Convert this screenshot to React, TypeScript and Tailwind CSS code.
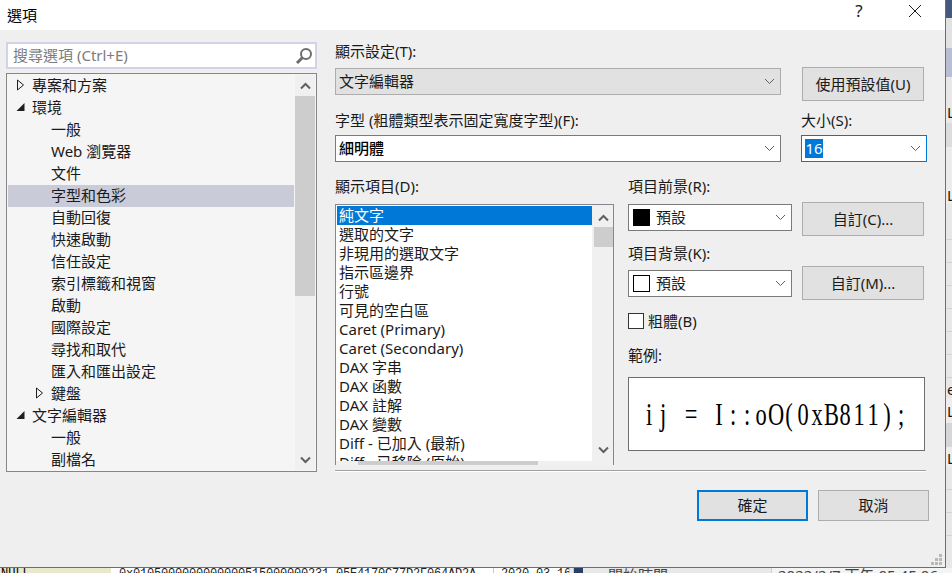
import React from "react";

const ui = "font-['Noto_Sans','Noto_Sans_CJK_TC',sans-serif]";

function Chevron() {
  return (
    <svg width="11" height="7" viewBox="0 0 11 7" className="shrink-0">
      <path d="M1 1 L5.5 5.5 L10 1" fill="none" stroke="#606060" strokeWidth="1" />
    </svg>
  );
}

function ScrollArrow({ up = false }: { up?: boolean }) {
  return (
    <svg width="11" height="8" viewBox="0 0 11 8">
      <path d={up ? "M1 6.5 L5.5 2 L10 6.5" : "M1 1.5 L5.5 6 L10 1.5"} fill="none" stroke="#606060" strokeWidth="2" />
    </svg>
  );
}

function Combo({ w, border, bg, children }: { w: string; border: string; bg: string; children: React.ReactNode }) {
  return (
    <div className={`${w} ${border} ${bg} h-[27px] border flex items-center justify-between pl-[3px] pr-[5px] shrink-0`}>
      <div className="flex items-center min-w-0">{children}</div>
      <Chevron />
    </div>
  );
}

function Btn({ children, className = "" }: { children: React.ReactNode; className?: string }) {
  return (
    <div className={`w-[122px] h-[34px] bg-[#e1e1e1] border border-[#adadad] flex items-center justify-center shrink-0 ${className}`}>
      {children}
    </div>
  );
}

function Label({ children, className = "" }: { children: React.ReactNode; className?: string }) {
  return <div className={`h-[20px] leading-[18px] whitespace-nowrap ${className}`}>{children}</div>;
}

const tree: { t: string; lvl: number; arrow?: "open" | "closed"; sel?: boolean }[] = [
  { t: "專案和方案", lvl: 0, arrow: "closed" },
  { t: "環境", lvl: 0, arrow: "open" },
  { t: "一般", lvl: 1 },
  { t: "Web 瀏覽器", lvl: 1 },
  { t: "文件", lvl: 1 },
  { t: "字型和色彩", lvl: 1, sel: true },
  { t: "自動回復", lvl: 1 },
  { t: "快速啟動", lvl: 1 },
  { t: "信任設定", lvl: 1 },
  { t: "索引標籤和視窗", lvl: 1 },
  { t: "啟動", lvl: 1 },
  { t: "國際設定", lvl: 1 },
  { t: "尋找和取代", lvl: 1 },
  { t: "匯入和匯出設定", lvl: 1 },
  { t: "鍵盤", lvl: 1, arrow: "closed" },
  { t: "文字編輯器", lvl: 0, arrow: "open" },
  { t: "一般", lvl: 1 },
  { t: "副檔名", lvl: 1 },
];

const items = [
  "純文字",
  "選取的文字",
  "非現用的選取文字",
  "指示區邊界",
  "行號",
  "可見的空白區",
  "Caret (Primary)",
  "Caret (Secondary)",
  "DAX 字串",
  "DAX 函數",
  "DAX 註解",
  "DAX 變數",
  "Diff - 已加入 (最新)",
  "Diff - 已移除 (原始)",
];

function TreeArrow({ kind }: { kind: "open" | "closed" }) {
  return kind === "closed" ? (
    <svg width="9" height="12" viewBox="0 0 9 12">
      <path d="M1.5 1 L7.5 6 L1.5 11 Z" fill="none" stroke="#1e1e1e" strokeWidth="1" />
    </svg>
  ) : (
    <svg width="9" height="12" viewBox="0 0 9 12">
      <path d="M0.5 10 L8.5 10 L8.5 2 Z" fill="#1e1e1e" />
    </svg>
  );
}

const rowLine = "bg-[#e8e8e8] border-b border-[#d4d4d4]";
const stripBands: { h: string; c: string; t?: string }[] = [
  { h: "h-[18px]", c: "bg-[#46587e]" },
  { h: "h-[30px]", c: "bg-[#e2e2e2]" },
  { h: "h-[29px]", c: "bg-[#b9bfd2]" },
  { h: "h-[44px]", c: "bg-[#e8e8e8]", t: "L" },
  { h: "h-[2px]", c: "bg-[#e8e8e8]" },
  { h: "h-[24px]", c: "bg-[#dcdcdc]" },
  { h: "h-[57px]", c: "bg-[#ececec]", t: "L" },
  { h: "h-[36px]", c: rowLine },
  { h: "h-[23px]", c: rowLine },
  { h: "h-[23px]", c: rowLine },
  { h: "h-[23px]", c: rowLine },
  { h: "h-[23px]", c: rowLine },
  { h: "h-[23px]", c: rowLine },
  { h: "h-[23px]", c: rowLine },
  { h: "h-[20px]", c: "bg-[#e8e8e8]", t: "e" },
  { h: "h-[22px]", c: "bg-[#ededed]", t: "L" },
  { h: "h-[3px]", c: "bg-[#ededed]" },
  { h: "h-[24px]", c: "bg-[#d6d6d8]" },
  { h: "h-[20px]", c: "bg-[#ededed]", t: "L" },
  { h: "h-[23px]", c: rowLine },
  { h: "h-[23px]", c: rowLine },
  { h: "h-[23px]", c: rowLine },
  { h: "h-[32px]", c: "bg-[#e8e8e8]" },
];

const sample = "ij = I::oO(0xB811);".split("");

export default function App() {
  return (
    <div className={`${ui} w-[952px] h-[573px] overflow-hidden flex flex-col text-[15px] text-[#1a1a1a] bg-[#e8e8e8]`}>
      <div className="flex h-[568px] shrink-0">
        {/* dialog */}
        <div className="w-[946px] h-[568px] shrink-0 flex flex-col border-r border-b border-[#6e6e6e] bg-[#efefef] relative">
          <div className="h-[30px] bg-white flex items-center justify-between pl-[7px] shrink-0">
            <span className="text-black">選項</span>
            <div className="flex items-center mb-[8px]">
              <span className="w-[14px] text-center text-[17px] leading-[20px]">?</span>
              <svg width="14" height="14" viewBox="0 0 14 14" className="ml-[42px] mr-[23px]">
                <path d="M1 1 L13 13 M13 1 L1 13" stroke="#1a1a1a" strokeWidth="1" fill="none" />
              </svg>
            </div>
          </div>

          <div className="flex flex-1 pt-[12px] pl-[6px] min-h-0">
            {/* left */}
            <div className="w-[311px] shrink-0">
              <div className="h-[27px] bg-white border-2 border-[#d2d3e6] flex items-center justify-between pl-[5px] pr-[2px]">
                <span className="text-[#7c7c7c]">搜尋選項 (Ctrl+E)</span>
                <svg width="18" height="18" viewBox="0 0 18 18">
                  <circle cx="11" cy="7" r="5" fill="none" stroke="#6e6e6e" strokeWidth="2" />
                  <path d="M7.5 10.5 L2 16" stroke="#6e6e6e" strokeWidth="3" fill="none" />
                </svg>
              </div>
              <div className="mt-[4px] h-[399px] border border-[#868686] bg-[#f5f5f5] flex overflow-hidden p-px">
                <div className="w-[286px] shrink-0 h-full overflow-hidden">
                  {tree.map((r, i) => (
                    <div
                      key={i}
                      className={`h-[22px] flex items-center whitespace-nowrap relative pb-[2px] ${r.sel ? "bg-[#c9cbd8]" : ""} ${r.lvl === 0 ? "pl-[24px]" : "pl-[43px]"}`}
                    >
                      {r.arrow && (
                        <span className={`absolute flex ${r.lvl === 0 ? "left-[8px]" : "left-[27px]"}`}>
                          <TreeArrow kind={r.arrow} />
                        </span>
                      )}
                      {r.t}
                    </div>
                  ))}
                </div>
                <div className="w-[20px] ml-px bg-[#f0f0f0] flex flex-col items-center shrink-0">
                  <div className="h-[21px] flex items-center justify-center shrink-0">
                    <ScrollArrow up />
                  </div>
                  <div className="w-full h-[200px] bg-[#cdcdcd] shrink-0" />
                  <div className="flex-1" />
                  <div className="h-[21px] flex items-center justify-center shrink-0">
                    <ScrollArrow />
                  </div>
                </div>
              </div>
            </div>

            {/* right */}
            <div className="ml-[18px] w-[594px] shrink-0">
              <div className="flex">
                <div className="w-[446px] shrink-0">
                  <Label className="mb-[6px]">顯示設定(T):</Label>
                  <Combo w="w-[446px]" border="border-[#adadad]" bg="bg-[#e1e1e1]">
                    文字編輯器
                  </Combo>
                </div>
                <Btn className="ml-[21px] mt-[25px]">使用預設值(U)</Btn>
              </div>

              <div className="flex mt-[10px]">
                <div className="w-[446px] shrink-0">
                  <Label className="mb-[4px]">字型 (粗體類型表示固定寬度字型)(F):</Label>
                  <Combo w="w-[446px]" border="border-[#7a7a7a]" bg="bg-white">
                    <span className="text-black font-medium">細明體</span>
                  </Combo>
                </div>
                <div className="ml-[20px]">
                  <Label className="mb-[4px]">大小(S):</Label>
                  <Combo w="w-[126px]" border="border-[#0078d7]" bg="bg-white">
                    <span className="bg-[#0078d7] text-white h-[19px] leading-[19px] w-[18px] text-center">16</span>
                  </Combo>
                </div>
              </div>

              <div className="flex mt-[15px]">
                <div className="w-[279px] shrink-0">
                  <Label className="mb-[7px]">顯示項目(D):</Label>
                  <div className="h-[261px] border-x border-t border-[#828790] bg-[#f0f0f0] flex overflow-hidden">
                    <div className="w-[256px] shrink-0 flex flex-col">
                      <div className="h-[256px] bg-white pt-px pl-px overflow-hidden shrink-0">
                        {items.map((t, i) => (
                          <div
                            key={i}
                            className={`h-[19px] leading-[19px] pl-[2px] whitespace-nowrap ${i === 0 ? "bg-[#0078d7] text-white" : ""}`}
                          >
                            {t}
                          </div>
                        ))}
                      </div>
                      <div className="h-[4px] pl-[22px] shrink-0">
                        <div className="w-[180px] h-full bg-[#cdcdcd]" />
                      </div>
                    </div>
                    <div className="w-[21px] pl-px flex flex-col items-center shrink-0">
                      <div className="h-[22px] flex items-center justify-center shrink-0 pt-[3px]">
                        <ScrollArrow up />
                      </div>
                      <div className="w-[19px] h-[20px] bg-[#cdcdcd] shrink-0" />
                      <div className="flex-1" />
                      <div className="h-[22px] flex items-center justify-center shrink-0 pb-[9px]">
                        <ScrollArrow />
                      </div>
                    </div>
                  </div>
                </div>

                <div className="ml-[14px] w-[299px] shrink-0">
                  <Label className="mb-[7px]">項目前景(R):</Label>
                  <div className="flex items-start">
                    <Combo w="w-[164px]" border="border-[#7a7a7a]" bg="bg-white">
                      <span className="w-[17px] h-[17px] bg-black ml-px mr-[6px]" />
                      預設
                    </Combo>
                    <Btn className="ml-[10px] -mt-[2px]">自訂(C)...</Btn>
                  </div>
                  <Label className="mt-[8px] mb-[6px]">項目背景(K):</Label>
                  <div className="flex items-start">
                    <Combo w="w-[164px]" border="border-[#7a7a7a]" bg="bg-white">
                      <span className="w-[17px] h-[17px] bg-white border border-black ml-px mr-[6px]" />
                      預設
                    </Combo>
                    <Btn className="ml-[10px] -mt-[4px]">自訂(M)...</Btn>
                  </div>
                  <div className="flex items-center mt-[13px] h-[16px]">
                    <span className="w-[16px] h-[16px] bg-white border border-[#333333] shrink-0 mr-[4px]" />
                    粗體(B)
                  </div>
                  <Label className="mt-[17px] mb-[11px]">範例:</Label>
                  <div className="w-[297px] h-[74px] bg-white border border-[#6e6e6e] flex items-center justify-center overflow-hidden">
                    <div className="flex shrink-0 scale-x-[0.7] font-['Liberation_Serif',serif] text-[32px] text-black leading-none mr-[3px]">
                      {sample.map((c, i) => (
                        <span key={i} className="w-[20px] text-center inline-block shrink-0">
                          {c === " " ? "\u00a0" : c}
                        </span>
                      ))}
                    </div>
                  </div>
                </div>
              </div>

              <div className="mt-[5px] w-[591px] h-[2px] bg-white border-t border-[#a0a0a0]" />

              <div className="flex mt-[18px] pl-[362px]">
                <div className="w-[111px] h-[31px] bg-[#e1e1e1] border-2 border-[#0078d7] flex items-center justify-center">確定</div>
                <div className="w-[111px] h-[31px] ml-[10px] bg-[#e1e1e1] border border-[#adadad] flex items-center justify-center">取消</div>
              </div>
            </div>
          </div>

          <svg width="12" height="12" viewBox="0 0 12 12" className="absolute right-[2px] bottom-[1px]">
            <g fill="#b8b8b8">
              <rect x="8" y="0" width="3" height="3" />
              <rect x="4" y="4" width="3" height="3" />
              <rect x="8" y="4" width="3" height="3" />
              <rect x="0" y="8" width="3" height="3" />
              <rect x="4" y="8" width="3" height="3" />
              <rect x="8" y="8" width="3" height="3" />
            </g>
          </svg>
        </div>

        {/* window behind, right edge */}
        <div className="w-[6px] shrink-0 overflow-hidden flex flex-col font-['Noto_Sans',sans-serif] text-[15px]">
          {stripBands.map((b, i) => (
            <div key={i} className={`${b.h} ${b.c} shrink-0 flex items-end overflow-hidden leading-[18px] pl-[1px]`}>
              {b.t ?? ""}
            </div>
          ))}
        </div>
      </div>

      {/* window behind, bottom edge */}
      <div className="h-[5px] flex overflow-hidden shrink-0 leading-[12px] whitespace-nowrap bg-[#ececec]">
        <div className="w-[111px] bg-[#e8e8cc] font-['Liberation_Mono',monospace] text-[12px] text-black shrink-0 pl-[1px]">NULL</div>
        <div className="w-[382px] bg-white font-['Liberation_Mono',monospace] text-[12px] tracking-[-0.2px] text-[#222222] shrink-0 pl-[8px] overflow-hidden">0x0105000000000000515000000231 05E4170C77D2F064AD2A</div>
        <div className="w-[76px] bg-white font-['Liberation_Mono',monospace] text-[12px] tracking-[-0.2px] text-[#222222] shrink-0 pl-[7px] overflow-hidden border-l border-[#c8c8c8]">2020-03-16</div>
        <div className="w-[5px] bg-[#e8e8e8] border-x border-[#c8c8c8] shrink-0" />
        <div className="w-[9px] bg-[#2b3f66] shrink-0" />
        <div className="w-[188px] bg-[#e8e8e8] pl-[25px] text-[15px] leading-[14px] text-[#444444] shrink-0">開始時間</div>
        <div className="flex-1 bg-[#f4f4f4] pl-[6px] text-[15px] leading-[14px] text-[#444444] border-l border-[#d0d0d0]">2022/2/7 下午 05:45:06</div>
      </div>
    </div>
  );
}
